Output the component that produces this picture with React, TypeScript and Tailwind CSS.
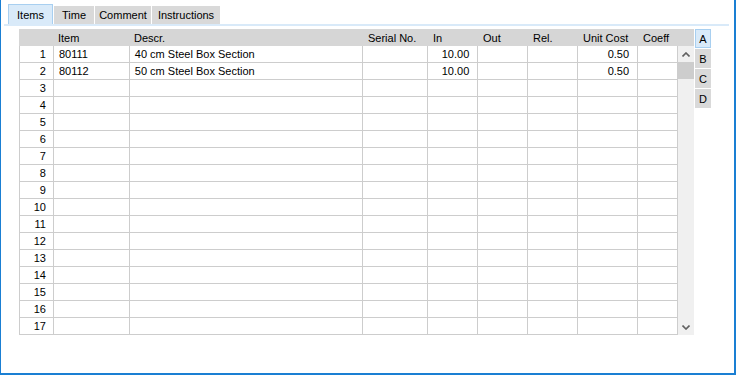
import React from "react";

const cols = [
  { key: "item", label: "Item", w: "w-[76px]" },
  { key: "descr", label: "Descr.", w: "w-[234px]" },
  { key: "serial", label: "Serial No.", w: "w-[65px]" },
  { key: "in", label: "In", w: "w-[50px]", right: true },
  { key: "out", label: "Out", w: "w-[50px]", right: true },
  { key: "rel", label: "Rel.", w: "w-[50px]", right: true },
  { key: "cost", label: "Unit Cost", w: "w-[60px]", right: true },
  { key: "coeff", label: "Coeff", w: "w-[40px]", right: true },
];

const data: Record<string, string>[] = [
  { item: "80111", descr: "40 cm Steel Box Section", in: "10.00", cost: "0.50" },
  { item: "80112", descr: "50 cm Steel Box Section", in: "10.00", cost: "0.50" },
];

const tabs = [
  { label: "Items", w: "w-[45px]", active: true },
  { label: "Time", w: "w-[40px]" },
  { label: "Comment", w: "w-[56px]" },
  { label: "Instructions", w: "w-[68px]" },
];

function Chevron({ up }: { up?: boolean }) {
  return (
    <svg width="8" height="5" viewBox="0 0 8 5" className="block">
      <path
        d={up ? "M0.5 4.5 L4 1 L7.5 4.5" : "M0.5 0.5 L4 4 L7.5 0.5"}
        fill="none"
        stroke="#606060"
        strokeWidth="1.6"
      />
    </svg>
  );
}

export default function App() {
  const rows = Array.from({ length: 17 }, (_, i) => i);
  return (
    <div
      className="w-[737px] h-[375px] bg-white text-[11px] text-black leading-none"
      style={{ fontFamily: '"Liberation Sans", Arial, sans-serif' }}
    >
      <div className="w-[736px] h-[375px] border-l border-r-2 border-b-2 border-[#1a7fd3] flex flex-col">
        {/* tab strip */}
        <div className="flex items-end gap-[1px] pl-[7px] pt-[4px] h-[24px]">
          {tabs.map((t) =>
            t.active ? (
              <div
                key={t.label}
                className={`${t.w} h-[20px] bg-[#d9eaf9] border border-b-0 border-[#a8cff0] flex items-center justify-center pt-[1px]`}
              >
                {t.label}
              </div>
            ) : (
              <div
                key={t.label}
                className={`${t.w} h-[18px] bg-[#d9d9d9] flex items-center justify-center pt-[1px]`}
              >
                {t.label}
              </div>
            )
          )}
        </div>
        <div className="h-[2px] bg-[#d9eaf9] ml-[3px] w-[725px]" />

        {/* table + side tabs */}
        <div className="flex mt-[3px] ml-[18px]">
          <div className="w-[675px] flex flex-col">
            <div className="h-[17px] bg-[#d6d6d6] flex items-center pt-[1px]">
              <div className="w-[35px]" />
              {cols.map((c) => (
                <div key={c.key} className={`${c.w} pl-[4px]`}>
                  {c.label}
                </div>
              ))}
            </div>
            <div className="flex">
              <div className="w-[659px] border-l border-[#cdcdcd]">
                {rows.map((r) => {
                  const d = data[r] || {};
                  return (
                    <div key={r} className="h-[17px] flex border-b border-[#cdcdcd]">
                      <div className="w-[34px] border-r border-[#cdcdcd] flex items-center justify-end pr-[7px] pt-[1px]">
                        {r + 1}
                      </div>
                      {cols.map((c) => (
                        <div
                          key={c.key}
                          className={`${c.w} border-r border-[#cdcdcd] flex items-center pt-[1px] ${
                            c.right ? "justify-end pr-[8px]" : "pl-[5px]"
                          }`}
                        >
                          {d[c.key] || ""}
                        </div>
                      ))}
                    </div>
                  );
                })}
              </div>
              <div className="w-[16px] bg-[#f0f0f0] flex flex-col">
                <div className="h-[16px] flex items-center justify-center">
                  <Chevron up />
                </div>
                <div className="h-[17px] bg-[#cdcdcd]" />
                <div className="flex-1" />
                <div className="h-[16px] flex items-center justify-center">
                  <Chevron />
                </div>
              </div>
            </div>
          </div>

          <div className="ml-[1px] w-[16px] flex flex-col gap-[1px]">
            {["A", "B", "C", "D"].map((l, i) => (
              <div
                key={l}
                className={`h-[19px] flex items-center justify-center pt-[1px] ${
                  i === 0 ? "bg-[#d9eaf9] border border-[#a8cff0]" : "bg-[#d9d9d9]"
                }`}
              >
                {l}
              </div>
            ))}
          </div>
        </div>
      </div>
    </div>
  );
}
